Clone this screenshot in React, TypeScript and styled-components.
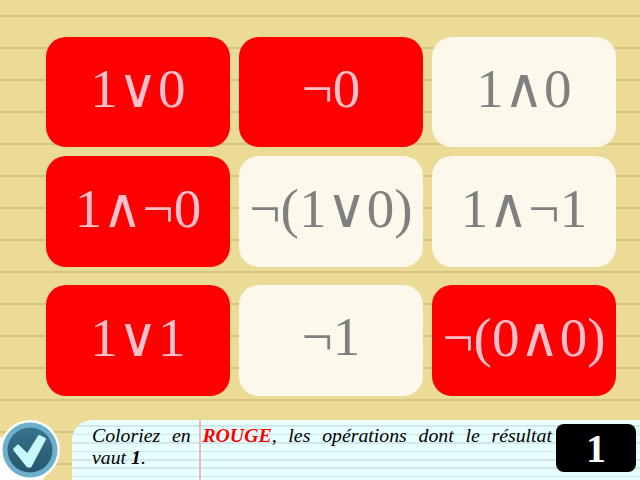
import React from "react";
import styled, { createGlobalStyle } from "styled-components";

const Global = createGlobalStyle`
  html, body {
    margin: 0;
    padding: 0;
    overflow: hidden;
  }
`;

const Page = styled.div`
  width: 640px;
  height: 480px;
  overflow: hidden;
  display: flex;
  flex-direction: column;
  font-family: "Liberation Serif", "DejaVu Serif", serif;
  background-color: #ecdb96;
  background-image: repeating-linear-gradient(
    to bottom,
    transparent 0,
    transparent 15px,
    #d5c583 15px,
    #d5c583 17px,
    transparent 17px,
    transparent 32px
  );
`;

const Board = styled.div`
  display: flex;
  flex-direction: column;
  padding: 37px 0 0 46px;
`;

const Row = styled.div<{ $height: number; $gap: number }>`
  display: flex;
  gap: 9px;
  height: ${(p) => p.$height}px;
  margin-top: ${(p) => p.$gap}px;
`;

const Cell = styled.div<{ $on: boolean }>`
  width: 184px;
  padding-bottom: 8px;
  box-sizing: border-box;
  display: flex;
  align-items: center;
  justify-content: center;
  border-radius: 20px;
  font-size: 55px;
  white-space: nowrap;
  background: ${(p) => (p.$on ? "#ff0000" : "rgba(255, 255, 255, 0.82)")};
  color: ${(p) => (p.$on ? "#ffc0cb" : "#808080")};
`;

const Footer = styled.div`
  margin-top: auto;
  height: 60px;
  display: flex;
`;

const Badge = styled.div`
  width: 72px;
  flex: none;
`;

const Sheet = styled.div`
  position: relative;
  flex: 1;
  display: flex;
  border-top-left-radius: 20px;
  background-color: #e8ffff;
  background-image: repeating-linear-gradient(
    to bottom,
    transparent 0,
    transparent 5.4px,
    #d0e8ea 5.4px,
    #d0e8ea 7px,
    transparent 7px,
    transparent 8.4px
  );
`;

const Margin = styled.div`
  position: absolute;
  left: 127px;
  top: 0;
  bottom: 0;
  width: 2px;
  background: #f0b8b8;
`;

const Prompt = styled.p`
  position: relative;
  flex: 1;
  margin: 4px 4px 0 20px;
  font-size: 19.8px;
  line-height: 22px;
  font-style: italic;
  text-align: justify;
  color: #000;
`;

const Red = styled.b`
  color: #ff0000;
`;

const Answer = styled.div`
  position: relative;
  width: 80px;
  height: 48px;
  margin: 4px 4px 0 0;
  flex: none;
  display: flex;
  align-items: center;
  justify-content: center;
  border-radius: 8px;
  background: #000;
  color: #fff;
  font-size: 40px;
  font-weight: bold;
`;

const rows = [
  {
    height: 110,
    gap: 0,
    cells: [
      { label: "1∨0", on: true },
      { label: "¬0", on: true },
      { label: "1∧0", on: false },
    ],
  },
  {
    height: 111,
    gap: 9,
    cells: [
      { label: "1∧¬0", on: true },
      { label: "¬(1∨0)", on: false },
      { label: "1∧¬1", on: false },
    ],
  },
  {
    height: 111,
    gap: 18,
    cells: [
      { label: "1∨1", on: true },
      { label: "¬1", on: false },
      { label: "¬(0∧0)", on: true },
    ],
  },
];

const CheckIcon = () => (
  <svg width="60" height="60" viewBox="0 0 60 60" style={{ display: "block" }}>
    <defs>
      <linearGradient id="disc" x1="0" y1="0" x2="0" y2="1">
        <stop offset="0" stopColor="#37748c" />
        <stop offset="1" stopColor="#27566e" />
      </linearGradient>
    </defs>
    <polygon points="0,17 0,60 43,60 56,40 30,30" fill="#fff" />
    <circle cx="30" cy="30" r="30" fill="#fff" />
    <circle cx="30" cy="30" r="27.5" fill="#6cb0cb" />
    <circle cx="30" cy="30" r="22.5" fill="url(#disc)" />
    <polygon
      points="14,29.5 18,25.5 27.5,34.5 39,16 45,19 30.5,46.5 27.5,46.5"
      fill="#c8f8fb"
      stroke="#c8f8fb"
      strokeWidth="2"
      strokeLinejoin="round"
    />
  </svg>
);

export default function App() {
  return (
    <Page>
      <Global />
      <Board>
        {rows.map((row, r) => (
          <Row key={r} $height={row.height} $gap={row.gap}>
            {row.cells.map((cell, c) => (
              <Cell key={c} $on={cell.on}>
                {cell.label}
              </Cell>
            ))}
          </Row>
        ))}
      </Board>
      <Footer>
        <Badge>
          <CheckIcon />
        </Badge>
        <Sheet>
          <Margin />
          <Prompt>
            Coloriez en <Red>ROUGE</Red>, les opérations dont le résultat vaut&nbsp;<b>1</b>.
          </Prompt>
          <Answer>1</Answer>
        </Sheet>
      </Footer>
    </Page>
  );
}
